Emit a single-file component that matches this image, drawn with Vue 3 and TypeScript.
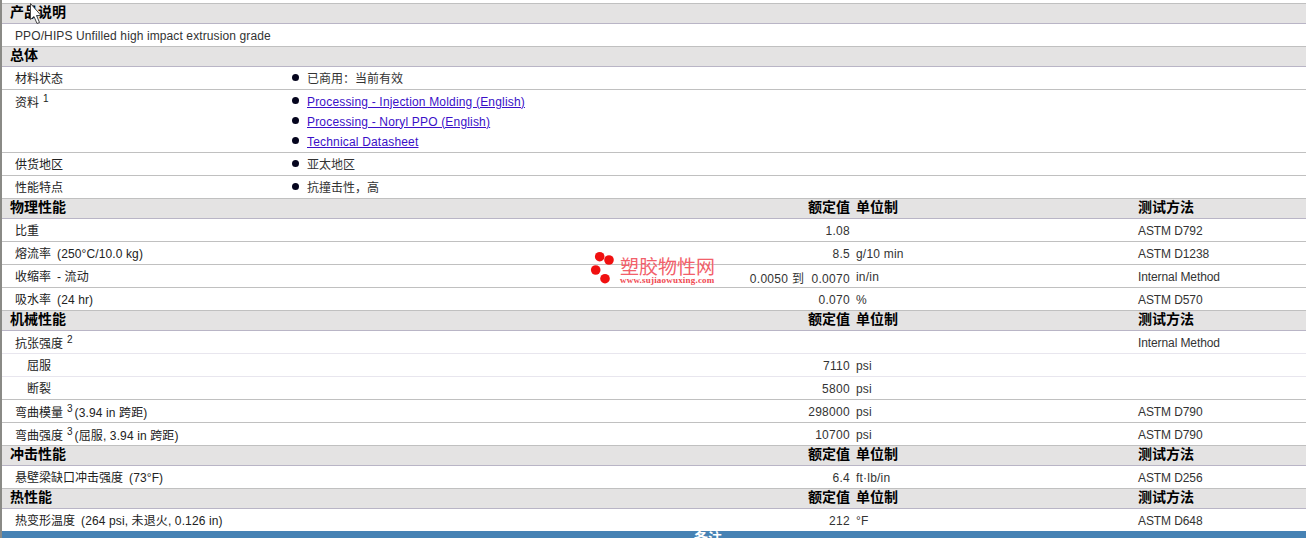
<script setup lang="ts">
type Row = {
  kind: 'head' | 'row'
  h: number
  label?: string
  sup?: string
  note?: string
  indent?: boolean
  light?: boolean
  val?: string
  unit?: string
  method?: string
  cols?: boolean
  items?: { text: string; link?: boolean }[]
  text?: string
}

const rows: Row[] = [
  { kind: 'head', h: 21, label: '产品说明' },
  { kind: 'row', h: 22, text: 'PPO/HIPS Unfilled high impact extrusion grade' },
  { kind: 'head', h: 21, label: '总体' },
  { kind: 'row', h: 22, label: '材料状态', items: [{ text: '已商用：当前有效' }] },
  {
    kind: 'row', h: 63, label: '资料', sup: '1',
    items: [
      { text: 'Processing - Injection Molding (English)', link: true },
      { text: 'Processing - Noryl PPO (English)', link: true },
      { text: 'Technical Datasheet', link: true },
    ],
  },
  { kind: 'row', h: 23, label: '供货地区', items: [{ text: '亚太地区' }] },
  { kind: 'row', h: 23, label: '性能特点', items: [{ text: '抗撞击性，高' }] },
  { kind: 'head', h: 21, label: '物理性能', cols: true },
  { kind: 'row', h: 22, label: '比重', val: '1.08', method: 'ASTM D792' },
  { kind: 'row', h: 23, label: '熔流率', note: '(250°C/10.0 kg)', val: '8.5', unit: 'g/10 min', method: 'ASTM D1238' },
  { kind: 'row', h: 23, label: '收缩率', note: '- 流动', val: '0.0050 到  0.0070', unit: 'in/in', method: 'Internal Method' },
  { kind: 'row', h: 23, label: '吸水率', note: '(24 hr)', val: '0.070', unit: '%', method: 'ASTM D570' },
  { kind: 'head', h: 21, label: '机械性能', cols: true },
  { kind: 'row', h: 22, label: '抗张强度', sup: '2', method: 'Internal Method', light: true },
  { kind: 'row', h: 23, label: '屈服', indent: true, val: '7110', unit: 'psi', light: true },
  { kind: 'row', h: 23, label: '断裂', indent: true, val: '5800', unit: 'psi' },
  { kind: 'row', h: 23, label: '弯曲模量', sup: '3', note: '(3.94 in 跨距)', val: '298000', unit: 'psi', method: 'ASTM D790' },
  { kind: 'row', h: 23, label: '弯曲强度', sup: '3', note: '(屈服, 3.94 in 跨距)', val: '10700', unit: 'psi', method: 'ASTM D790' },
  { kind: 'head', h: 21, label: '冲击性能', cols: true },
  { kind: 'row', h: 22, label: '悬壁梁缺口冲击强度', note: '(73°F)', val: '6.4', unit: 'ft·lb/in', method: 'ASTM D256' },
  { kind: 'head', h: 21, label: '热性能', cols: true },
  { kind: 'row', h: 22, label: '热变形温度', note: '(264 psi, 未退火, 0.126 in)', val: '212', unit: '°F', method: 'ASTM D648' },
]

const dots = [
  { cx: 11.7, cy: 7.7 },
  { cx: 21, cy: 11 },
  { cx: 7.7, cy: 21 },
  { cx: 17, cy: 29.7 },
]
</script>

<template>
  <div class="sheet">
    <div
      v-for="(r, i) in rows"
      :key="i"
      class="line"
      :class="[r.kind, { light: r.light }]"
      :style="{ height: r.h + 'px' }"
    >
      <template v-if="r.kind === 'head'">
        <div class="c-label">{{ r.label }}</div>
        <template v-if="r.cols">
          <div class="c-val">额定值</div>
          <div class="c-unit">单位制</div>
          <div class="c-method">测试方法</div>
        </template>
      </template>
      <template v-else-if="r.text">
        <div class="c-text">{{ r.text }}</div>
      </template>
      <template v-else-if="r.items">
        <div class="c-label top" :class="{ 'has-sup': r.sup }">
          {{ r.label }}<sup v-if="r.sup">{{ r.sup }}</sup>
        </div>
        <ul class="c-items">
          <li v-for="it in r.items" :key="it.text">
            <span class="bullet"></span>
            <a v-if="it.link" href="#">{{ it.text }}</a>
            <span v-else>{{ it.text }}</span>
          </li>
        </ul>
      </template>
      <template v-else>
        <div class="c-label" :class="{ indent: r.indent, 'has-sup': r.sup }">
          {{ r.label }}<sup v-if="r.sup">{{ r.sup }}</sup><span v-if="r.note" class="note" :class="{ tight: r.sup }">{{ r.note }}</span>
        </div>
        <div class="c-val">{{ r.val }}</div>
        <div class="c-unit">{{ r.unit }}</div>
        <div class="c-method">{{ r.method }}</div>
      </template>
    </div>
    <div class="footer">备注</div>

    <div class="mark">
      <svg width="26" height="36" viewBox="0 0 26 36">
        <circle v-for="(d, i) in dots" :key="i" :cx="d.cx" :cy="d.cy" r="4.8" fill="#f01010" />
      </svg>
      <div class="mark-text">
        <div class="mark-cn">塑胶物性网</div>
        <div class="mark-url">www.sujiaowuxing.com</div>
      </div>
    </div>

    <svg class="cursor" width="14" height="24" viewBox="0 0 14 24">
      <path d="M1.5 1.5V17.5L5 14.5L8 21.5L10.5 20.5L7.5 13.5H12Z" fill="#fff" stroke="#444" stroke-width="1" />
    </svg>
  </div>
</template>

<style scoped>
.sheet {
  position: relative;
  width: 1306px;
  height: 538px;
  box-sizing: border-box;
  padding-top: 3px;
  overflow: hidden;
  background: #fff;
  border-left: 2px solid #8a8a86;
  font-family: "Liberation Sans", "Noto Sans CJK SC", sans-serif;
  font-size: 12px;
  color: #333;
}
.line {
  display: grid;
  grid-template-columns: 278px 570px 282px 1fr;
  box-sizing: border-box;
  align-items: center;
  border-top: 1px solid #c0c0c0;
}
.head {
  background: #e4e3e3;
  border-bottom: 1px solid #b9b5c6;
  padding-bottom: 3px;
  font-size: 14px;
  line-height: 16px;
  font-weight: 700;
  color: #000;
}
.head .c-label {
  padding-left: 8px;
}
.head + .row {
  border-top: 0;
}
.row.light + .row {
  border-top-color: #e8e6ee;
}
.c-label {
  padding-left: 13px;
  white-space: nowrap;
}
.row .c-label {
  padding-bottom: 2px;
  color: #222;
}
.row .c-label.has-sup {
  padding-bottom: 0;
}
.row .c-label.top {
  align-self: start;
  padding-top: 2px;
  padding-bottom: 0;
}
.row .c-label.top.has-sup {
  padding-top: 3px;
}
.c-label.indent {
  padding-left: 25px;
}
.c-text {
  grid-column: 1 / -1;
  padding-left: 13px;
  padding-top: 2px;
  letter-spacing: 0.11px;
}
.c-val {
  grid-column: 2;
  text-align: right;
  white-space: pre;
}
.c-unit {
  grid-column: 3;
  padding-left: 6px;
}
.c-method {
  grid-column: 4;
  padding-left: 6px;
}
.row .c-val,
.row .c-unit,
.row .c-method {
  padding-top: 2px;
}
.row .c-val {
  letter-spacing: 0.3px;
}
.row .c-unit {
  letter-spacing: 0.2px;
}
.row .c-method {
  letter-spacing: -0.1px;
}
.note {
  margin-left: 6px;
  letter-spacing: 0.12px;
}
.note.tight {
  margin-left: 2px;
}
sup {
  font-size: 10px;
  line-height: 0;
  margin-left: 4px;
  vertical-align: 5px;
}
.c-items {
  grid-column: 2 / -1;
  list-style: none;
  margin: 0;
  padding: 0 0 1px;
}
.c-items li {
  display: flex;
  align-items: center;
  height: 20px;
  gap: 8px;
  padding-left: 12px;
}
.bullet {
  width: 7px;
  height: 7px;
  border-radius: 50%;
  background: #05051e;
}
a {
  color: #3a10c8;
  text-decoration: underline;
  letter-spacing: 0.18px;
  padding-top: 2px;
}
.footer {
  height: 20px;
  background: #4682b4;
  color: #fff;
  font-size: 14px;
  font-weight: 700;
  line-height: 14px;
  padding-left: 692px;
}
.mark {
  position: absolute;
  left: 586px;
  top: 249px;
  display: flex;
  gap: 6px;
  pointer-events: none;
}
.mark-text {
  margin-top: 9px;
}
.mark-cn {
  font-size: 19px;
  line-height: 20px;
  color: #f2606a;
}
.mark-url {
  margin-top: -3px;
  font-family: "Liberation Serif", serif;
  font-size: 9px;
  line-height: 10px;
  letter-spacing: 0.2px;
  font-weight: 700;
  color: #f0484f;
}
.cursor {
  position: absolute;
  left: 27px;
  top: 2px;
}
</style>
